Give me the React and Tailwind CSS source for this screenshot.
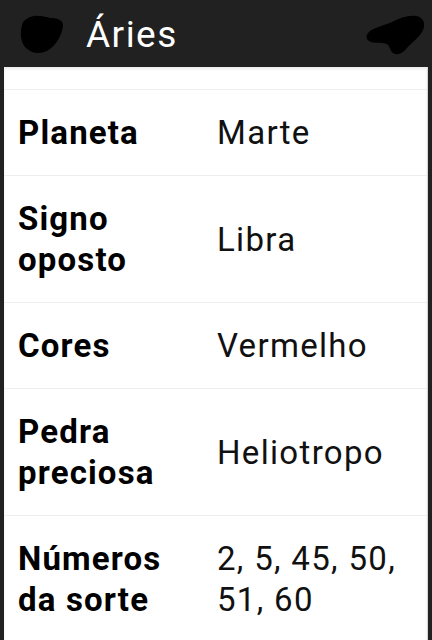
import React from "react";

const rows = [
  { label: ["Planeta"], value: ["Marte"] },
  { label: ["Signo", "oposto"], value: ["Libra"] },
  { label: ["Cores"], value: ["Vermelho"] },
  { label: ["Pedra", "preciosa"], value: ["Heliotropo"] },
  { label: ["Números", "da sorte"], value: ["2, 5, 45, 50,", "51, 60"] },
];

function Lines({ items }) {
  return items.map((t, i) => (
    <React.Fragment key={i}>
      {i > 0 && <br />}
      {t}
    </React.Fragment>
  ));
}

export default function App() {
  return (
    <div
      className="w-[432px] h-[640px] bg-[#212121] flex flex-col overflow-hidden"
      style={{ fontFamily: "Roboto, 'Noto Sans', sans-serif" }}
    >
      <header className="h-[67px] shrink-0 flex items-center">
        <svg width="48" height="42" viewBox="0 0 48 42" className="ml-[18px] shrink-0">
          <path
            d="M5 9 C10 4 15 2 21 3 C27 3 30 5 34 5 C40 5 46 8 45 13 C44 22 38 33 29 38 C22 41 14 41 8 35 C3 30 1 20 5 9 Z"
            fill="#000"
          />
        </svg>
        <h1 className="ml-[20px] text-[37px] leading-none text-white tracking-[0.04em] pt-[2px]">Áries</h1>
        <svg width="66" height="46" viewBox="0 0 66 46" className="ml-auto mr-[4px] shrink-0">
          <path
            d="M6 22 C10 17 20 15 30 11 C38 7 46 4 54 5 C61 6 64 12 61 19 C58 26 50 31 45 37 C41 42 36 45 31 42 C28 40 28 35 25 33 C20 31 12 33 7 30 C4 28 4 25 6 22 Z"
            fill="#000"
          />
        </svg>
      </header>
      <main className="flex-1 mx-[4px] bg-white overflow-hidden border-r border-[#d6d6d6] shadow-[inset_0_2px_3px_rgba(0,0,0,0.08)]">
        <div className="h-[23px] border-b border-[#eeeeee]" />
        {rows.map((r, i) => (
          <div key={i} className="flex items-center border-b border-[#eeeeee] py-[22px] text-[33px] leading-[41px] text-[#111]">
            <div className="w-[213px] shrink-0 pl-[14px] font-bold text-black tracking-[0.035em]">
              <Lines items={r.label} />
            </div>
            <div className="flex-1 tracking-[0.04em]">
              <Lines items={r.value} />
            </div>
          </div>
        ))}
      </main>
    </div>
  );
}
